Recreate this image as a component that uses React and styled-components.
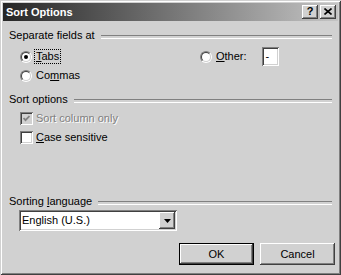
import React from 'react';
import styled, { createGlobalStyle, css } from 'styled-components';

const FACE = '#d1d1d1';

const GlobalStyle = createGlobalStyle`
  html, body { margin: 0; padding: 0; background: ${FACE}; }
  body { font-family: "Liberation Sans", Arial, sans-serif; font-size: 11px; color: #000; }
  * { box-sizing: border-box; }
`;

const raised = css`
  background: ${FACE};
  box-shadow: inset -1px -1px #404040, inset 1px 1px #fff, inset -2px -2px #808080, inset 2px 2px ${FACE};
`;

const sunken = css`
  box-shadow: inset 1px 1px #808080, inset -1px -1px #fff, inset 2px 2px #404040, inset -2px -2px ${FACE};
`;

const Window = styled.div`
  width: 341px;
  height: 275px;
  padding: 3px;
  background: ${FACE};
  box-shadow: inset 1px 1px ${FACE}, inset -1px -1px #404040, inset 2px 2px #fff, inset -2px -2px #808080;
  display: flex;
  flex-direction: column;
`;

const TitleBar = styled.div`
  height: 18px;
  display: flex;
  align-items: center;
  padding: 0 2px 0 3px;
  background: linear-gradient(to right, #262626, #c4c4c4);
`;

const Title = styled.div`
  flex: 1;
  color: #fff;
  font-weight: bold;
  font-size: 11px;
  line-height: 13px;
`;

const CaptionButton = styled.div`
  ${raised};
  width: 16px;
  height: 14px;
  display: flex;
  align-items: center;
  justify-content: center;
  font-weight: bold;
  font-size: 11px;
  line-height: 11px;
  color: #000;
  margin-left: ${p => (p.$gap ? '2px' : '0')};
  padding-bottom: 1px;
`;

const Body = styled.div`
  flex: 1;
  display: flex;
  flex-direction: column;
  padding: 8px 3px 0 6px;
`;

const GroupHeader = styled.div`
  display: flex;
  align-items: center;
  height: 13px;
  line-height: 13px;
  margin-top: ${p => p.$mt || 0}px;
  margin-right: 3px;
  &::after {
    content: '';
    flex: 1;
    height: 2px;
    margin: 2px 0 0 6px;
    border-top: 1px solid #808080;
    border-bottom: 1px solid #fff;
  }
`;

const GroupText = styled.span`
  white-space: nowrap;
`;

const Rows = styled.div`
  display: flex;
  flex-direction: column;
  padding-left: 11px;
  margin-top: ${p => p.$mt || 0}px;
`;

const Row = styled.div`
  display: flex;
  align-items: center;
  height: 19px;
`;

const Option = styled.div`
  display: flex;
  align-items: center;
  width: ${p => (p.$w ? `${p.$w}px` : 'auto')};
`;

const RadioOuter = styled.span`
  width: 12px;
  height: 12px;
  border-radius: 50%;
  border: 1px solid;
  border-color: #808080 #fff #fff #808080;
  display: flex;
  flex: none;
`;

const RadioInner = styled.span`
  flex: 1;
  border-radius: 50%;
  border: 1px solid;
  border-color: #404040 ${FACE} ${FACE} #404040;
  background: #fff;
  display: flex;
  align-items: center;
  justify-content: center;
`;

const Dot = styled.span`
  width: 4px;
  height: 4px;
  border-radius: 50%;
  background: #000;
`;

const CheckBox = styled.span`
  ${sunken};
  width: 13px;
  height: 13px;
  flex: none;
  background: ${p => (p.$disabled ? FACE : '#fff')};
  display: flex;
  align-items: center;
  justify-content: center;
`;

const Label = styled.span`
  line-height: 13px;
  padding: 0 1px;
  border: 1px dotted ${p => (p.$focus ? '#000' : 'transparent')};
  margin-left: ${p => p.$ml ?? 2}px;
  white-space: nowrap;
  color: ${p => (p.$disabled ? '#808080' : '#000')};
  text-shadow: ${p => (p.$disabled ? '1px 1px #fff' : 'none')};
`;

const U = styled.span`
  text-decoration: underline;
  text-underline-offset: 1px;
`;

const SmallField = styled.div`
  ${sunken};
  width: 17px;
  height: 19px;
  background: #fff;
  margin-left: 13px;
  padding: 3px 0 0 4px;
  line-height: 13px;
`;

const Combo = styled.div`
  ${sunken};
  width: 158px;
  height: 21px;
  margin: 2px 0 0 10px;
  background: #fff;
  display: flex;
  align-items: center;
  padding: 2px;
`;

const ComboText = styled.div`
  flex: 1;
  padding-left: 1px;
  line-height: 13px;
`;

const DropButton = styled.div`
  ${raised};
  width: 16px;
  height: 17px;
  display: flex;
  align-items: center;
  justify-content: center;
`;

const ButtonRow = styled.div`
  display: flex;
  justify-content: flex-end;
  gap: 6px;
  margin-top: 12px;
`;

const PushButton = styled.div`
  width: 75px;
  height: 22px;
  display: flex;
  align-items: center;
  justify-content: center;
  background: ${FACE};
  box-shadow: ${p =>
    p.$default
      ? `inset 0 0 0 1px #000, inset -2px -2px #404040, inset 2px 2px #fff, inset -3px -3px #808080`
      : `inset -1px -1px #404040, inset 1px 1px #fff, inset -2px -2px #808080, inset 2px 2px ${FACE}`};
`;

const Radio = ({ checked }) => (
  <RadioOuter>
    <RadioInner>{checked && <Dot />}</RadioInner>
  </RadioOuter>
);

export default function App() {
  return (
    <>
      <GlobalStyle />
      <Window>
        <TitleBar>
          <Title>Sort Options</Title>
          <CaptionButton>?</CaptionButton>
          <CaptionButton $gap>
            <svg width="8" height="7" viewBox="0 0 8 7">
              <path d="M0.5 0.5 L7.5 6.5 M7.5 0.5 L0.5 6.5" stroke="#000" strokeWidth="1.6" fill="none" />
            </svg>
          </CaptionButton>
        </TitleBar>
        <Body>
          <GroupHeader><GroupText>Separate fields at</GroupText></GroupHeader>
          <Rows $mt={5}>
            <Row>
              <Option $w={180}>
                <Radio checked />
                <Label $focus><U>T</U>abs</Label>
              </Option>
              <Option>
                <Radio />
                <Label><U>O</U>ther:</Label>
                <SmallField>-</SmallField>
              </Option>
            </Row>
            <Row>
              <Option>
                <Radio />
                <Label>Co<U>m</U>mas</Label>
              </Option>
            </Row>
          </Rows>

          <GroupHeader $mt={8}><GroupText>Sort options</GroupText></GroupHeader>
          <Rows $mt={3}>
            <Row>
              <Option>
                <CheckBox $disabled>
                  <svg width="7" height="7" viewBox="0 0 7 7">
                    <path d="M0.5 3 L2.5 5.2 L6.5 1" stroke="#808080" strokeWidth="1.8" fill="none" />
                  </svg>
                </CheckBox>
                <Label $ml={1} $disabled>Sort column only</Label>
              </Option>
            </Row>
            <Row>
              <Option>
                <CheckBox />
                <Label $ml={1}><U>C</U>ase sensitive</Label>
              </Option>
            </Row>
          </Rows>

          <GroupHeader $mt={48}><GroupText>Sorting <U>l</U>anguage</GroupText></GroupHeader>
          <Combo>
            <ComboText>English (U.S.)</ComboText>
            <DropButton>
              <svg width="7" height="4" viewBox="0 0 7 4">
                <path d="M0 0 H7 L3.5 4 Z" fill="#000" />
              </svg>
            </DropButton>
          </Combo>

          <ButtonRow>
            <PushButton $default>OK</PushButton>
            <PushButton>Cancel</PushButton>
          </ButtonRow>
        </Body>
      </Window>
    </>
  );
}
